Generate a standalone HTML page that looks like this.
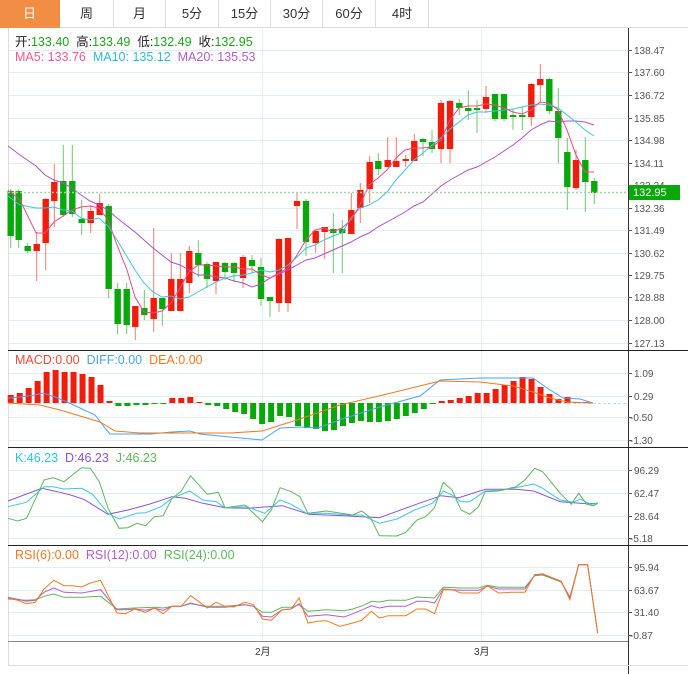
<!DOCTYPE html>
<html><head><meta charset="utf-8">
<style>
body{margin:0;width:688px;height:674px;background:#fff;overflow:hidden;font-family:"Liberation Sans","Noto Sans CJK SC",sans-serif;}
.tabs{position:absolute;left:0;top:0;height:28px;width:688px;}
.tab{position:absolute;top:0;height:28px;line-height:28px;text-align:center;font-size:13px;color:#333;border-right:1px solid #ddd;border-bottom:1px solid #ddd;box-sizing:border-box}
svg{position:absolute;left:0;top:0}
.info{position:absolute;font-size:12.5px;line-height:14px;white-space:pre;}
</style></head><body>
<svg id="s" width="688" height="674" xmlns="http://www.w3.org/2000/svg"></svg>
<div class="tabs">
<div class="tab" style="left:0;width:60px;background:#f28d45;color:#fff;border-color:#f28d45">日</div>
<div class="tab" style="left:60px;width:54px">周</div>
<div class="tab" style="left:114px;width:52px">月</div>
<div class="tab" style="left:166px;width:53px">5分</div>
<div class="tab" style="left:219px;width:52px">15分</div>
<div class="tab" style="left:271px;width:52px">30分</div>
<div class="tab" style="left:323px;width:53px">60分</div>
<div class="tab" style="left:376px;width:53px">4时</div>
<div class="tab" style="left:429px;width:259px;border-right:none"></div>
</div>
<div class="info" style="left:15px;top:35px;color:#222">开:<span style="color:#1ea51e">133.40</span>  高:<span style="color:#1ea51e">133.49</span>  低:<span style="color:#1ea51e">132.49</span>  收:<span style="color:#1ea51e">132.95</span></div>
<div class="info" style="left:15px;top:50px"><span style="color:#ef5b8c">MA5: 133.76</span>  <span style="color:#2ebad8">MA10: 135.12</span>  <span style="color:#b45ec9">MA20: 135.53</span></div>
<div class="info" style="left:15px;top:353px"><span style="color:#ee4a3a">MACD:0.00</span>  <span style="color:#4aa3f0">DIFF:0.00</span>  <span style="color:#f4791f">DEA:0.00</span></div>
<div class="info" style="left:15px;top:451px"><span style="color:#2ec4de">K:46.23</span>  <span style="color:#8b55d6">D:46.23</span>  <span style="color:#5cb85c">J:46.23</span></div>
<div class="info" style="left:15px;top:548px"><span style="color:#f4791f">RSI(6):0.00</span>  <span style="color:#b45ec9">RSI(12):0.00</span>  <span style="color:#5cb85c">RSI(24):0.00</span></div>
<script>
var s=document.getElementById('s'),h='';
function L(x1,y1,x2,y2,c,w,d){h+='<line x1="'+x1+'" y1="'+y1+'" x2="'+x2+'" y2="'+y2+'" stroke="'+c+'" stroke-width="'+(w||1)+'"'+(d?' stroke-dasharray="'+d+'"':'')+'/>';}
function T(x,y,t,c,sz){h+='<text x="'+x+'" y="'+y+'" fill="'+(c||'#555')+'" font-size="'+(sz||10)+'" font-family="Liberation Sans,Noto Sans CJK SC,sans-serif">'+t+'</text>';}
function P(pts,c,sx,oy,sy){var a=[];for(var i=0;i<pts.length;i+=2)a.push((pts[i]/(sx||1)).toFixed(1)+','+(oy!==undefined?oy+pts[i+1]/sy:pts[i+1]).toFixed(1));h+='<polyline fill="none" stroke="'+c+'" stroke-width="1" points="'+a.join(' ')+'"/>';}
var mainY=[50,72,95,118,140,163,185,208,230,253,275,297,320,343];
mainY.forEach(function(y){L(8,y+.5,628,y+.5,'#e6edf2');});
[373,396,417,440,470,493,516,538,567,590,612,635].forEach(function(y){L(8,y+.5,628,y+.5,'#e6edf2');});
L(262.5,28,262.5,642,'#e8eef2');L(481.5,28,481.5,642,'#e8eef2');
L(8.5,28,8.5,665,'#ddd');L(628.5,28,628.5,674,'#333');
L(8,350.5,688,350.5,'#222');L(8,447.5,688,447.5,'#222');L(8,545.5,688,545.5,'#222');L(8,641.5,628,641.5,'#888');
L(8,665.5,688,665.5,'#ddd');
var ml=['138.47','137.60','136.72','135.85','134.98','134.11','133.24','132.36','131.49','130.62','129.75','128.88','128.00','127.13'];
ml.forEach(function(t,i){L(628,mainY[i]+.5,632,mainY[i]+.5,'#555');T(634,mainY[i]+4,t);});
[[373,'1.09'],[396,'0.29'],[417,'-0.50'],[440,'-1.30'],[470,'96.29'],[493,'62.47'],[516,'28.64'],[538,'-5.18'],[567,'95.94'],[590,'63.67'],[612,'31.40'],[635,'-0.87']].forEach(function(a){L(628,a[0]+.5,632,a[0]+.5,'#555');T(a[1][0]=='-'?630:634,a[0]+4,a[1]);});
T(255,655,'2月','#333',10);T(474,655,'3月','#333',10);
var C=[[10.7,191,236,189,248,0],[18.7,191,240,189,248,0],[27.7,246,251,243,253,0],[36.7,244,251,232,281,1],[45.7,199,243,198,270,1],[54.3,182,201,164,227,1],[63.3,181,215,145,217,0],[72.3,181,214,145,217,0],[81.7,219,223,200,235,0],[90.7,211,223,205,233,1],[99.7,203,215,194,215,1],[108.7,206,289,204,298,0],[117.7,289,324,283,334,0],[126.7,289,325,283,334,0],[135.3,306,327,306,340,1],[144.3,308,315,290,320,0],[153.7,298,319,228,332,1],[162.3,298,309,298,326,0],[171.3,279,311,253,311,1],[180.3,279,311,253,311,1],[189.3,251,283,246,293,1],[198.3,253,265,240,277,0],[207,264,279,262,288,0],[216,262,281,262,294,1],[225,263,272,262,280,0],[234,263,273,262,282,0],[243,257,278,255,288,1],[252,260,266,255,273,0],[261,267,299,258,306,0],[270,297,301,297,317,0],[279,239,303,238,312,1],[288,238,303,238,312,1],[297,201,206,193,229,1],[306,201,242,199,256,0],[315.7,231,243,230,253,1],[324.7,227,232,227,259,1],[333.3,229,233,213,273,0],[342.3,229,233,220,273,0],[351.3,210,234,193,234,1],[360.3,190,208,183,223,1],[369.7,162,189,156,203,1],[378.3,161,169,153,175,0],[387.7,160,167,137,167,1],[396.3,161,167,137,167,1],[405.7,159,161,155,167,1],[414.3,141,161,134,161,1],[423,139,142,138,156,0],[432,142,149,130,153,0],[441,103,149,100,163,1],[450,101,149,100,163,1],[459.3,103,108,99,115,0],[468.3,108,111,90,120,0],[477,108,110,100,133,0],[486,97,109,86,113,1],[495,94,119,94,121,0],[504,94,119,94,121,0],[513,115,117,109,130,0],[522.3,115,117,107,130,0],[531.3,84,117,83,126,1],[540.3,79,85,64,102,1],[549.3,79,111,78,114,0],[558.3,111,138,88,163,0],[567.3,152,187,138,210,0],[576,160,188,150,190,1],[585.3,160,182,137,212,0],[594.3,181,193,178,204,0]];
C.forEach(function(c){var col=c[5]?'#f01c0c':'#08a80a',wc=c[5]?'#f57a70':'#6cc86c';L(c[0],c[3],c[0],c[4],wc);var t=Math.min(c[1],c[2]),b=Math.max(c[1],c[2]);h+='<rect x="'+(c[0]-3.2)+'" y="'+t+'" width="6.4" height="'+Math.max(1,b-t)+'" fill="'+col+'"/>';});
P([8,146,20,155,36,166,45,175,54,180,63,183,72,188,81,195,90,201,99,205,108,210,117,218,126,225,135,232,144,240,153,248,162,255,171,262,180,265,189,270,198,275,207,275,216,277,225,278,234,281,243,283,252,287,261,284,270,278,279,274,288,270,297,265,306,260,315,258,324,254,333,250,342,246,351,242,360,237,369,233,378,227,387,222,396,217,405,212,414,206,423,202,432,194,441,186,450,180,459,175,468,170,477,167,486,162,495,157,504,151,513,145,522,138,531,130,540,125,549,121,558,122,567,121,576,121,585,122,594,125],'#b04fcb');
P([8,196,20,205,36,208,45,208,54,207,63,210,72,211,81,218,90,220,99,218,108,226,117,240,126,255,135,270,144,283,153,292,162,297,171,296,180,299,189,297,198,292,207,287,216,282,225,278,234,276,243,275,252,273,261,270,270,272,279,270,288,265,297,257,306,248,315,245,324,240,333,236,342,233,351,218,360,208,369,205,378,200,387,192,396,180,405,170,414,160,423,153,432,145,441,138,450,129,459,122,468,115,477,112,486,112,495,111,504,110,513,109,522,107,531,105,540,104,549,105,558,108,567,115,576,122,585,130,594,136],'#3cc6df');
P([8,190,20,200,36,233,45,233,54,222,63,216,72,210,81,207,90,206,99,208,108,220,117,245,127,270,135,297,144,312,153,313,162,311,171,303,180,288,189,272,198,265,207,265,216,266,225,267,234,267,243,269,252,269,261,275,270,278,279,273,288,268,297,255,306,240,315,230,324,228,333,232,342,228,351,220,360,205,369,185,378,178,387,170,396,158,405,150,414,148,423,148,432,147,441,140,450,120,459,108,468,106,477,106,486,104,495,105,504,108,513,112,522,114,531,110,540,102,549,103,558,110,567,130,576,155,585,172,594,172],'#ee4a82');
L(8,192.5,628,192.5,'#9fd99f',1.5,'2,2');
h+='<rect x="629" y="185" width="51" height="15" fill="#08a80a"/>';T(633,196,'132.95','#fff',11);
var M=[395,393,388,381,372,370,372,372,374,377,385,401,406,406,405,405,403,403,398,398,397,402,405,406,409,412,414,419,424,422,416,417,426,428,429,431,430,426,423,421,422,422,421,419,416,413,409,403.5,401,400,398,396,393,393,389,385,381,377,379,387,394,399,397,402,402];
L(8,403.5,628,403.5,'#bfe0f4',1,'3,2');
M.forEach(function(y,i){var x=10.7+8.98*i;var up=y<403;h+='<rect x="'+(x-3)+'" y="'+Math.min(y,403)+'" width="6" height="'+Math.max(1,Math.abs(y-403))+'" fill="'+(up?'#f01c0c':'#08a80a')+'"/>';});
P([8,398,20,397,35,395,43,393,55,397,65,401,80,408,95,415,105,428,110,434,130,434,150,434,172,432,190,431,200,434,230,437,262,440,280,428,300,427,318,428,342,419,383,406,420,396,440,380,480,378,533,378,547,388,563,398,580,399,593,403],'#4aa3f0');
P([8,403,40,405,60,410,100,422,115,431,140,433,200,433,230,433,262,431,300,419,340,405,383,395,440,381,480,382,513,386,533,392,550,398,567,402,593,403],'#f4791f');
var kx=2.267;
P([18,168,95,130,130,140,160,150,190,163,245,208,290,195,340,177,390,155,420,160,460,175,510,188,560,190,640,182,700,208,780,212,860,218,950,175,1000,152,1040,158,1100,133,1170,133,1210,138,1270,170,1330,176,1355,175],'#8b55d6',kx,445,3);
P([18,185,60,172,100,125,120,125,145,132,185,130,210,148,245,205,270,222,310,205,330,203,365,185,390,160,430,138,460,165,490,170,510,188,560,185,600,205,635,165,660,178,695,205,740,205,790,210,820,210,860,235,900,222,940,195,980,175,1005,138,1025,150,1045,170,1065,170,1100,138,1140,135,1180,125,1210,117,1230,130,1270,165,1300,172,1315,162,1340,178,1355,175],'#3ac8e0',kx,445,3);
P([18,220,40,228,60,220,100,105,120,98,145,110,185,68,205,70,225,110,245,190,270,250,290,248,310,235,330,242,350,215,370,212,390,160,410,140,432,92,470,148,495,142,510,188,555,180,595,230,615,195,635,128,660,140,680,155,698,205,740,198,800,210,820,198,840,218,860,272,900,273,920,262,945,225,965,215,985,188,1005,112,1025,135,1045,195,1065,208,1085,185,1100,140,1130,138,1170,125,1190,105,1212,70,1230,80,1270,145,1295,178,1312,145,1330,178,1345,182,1355,175],'#5cb85c',kx,445,3);
P([18,168,60,172,80,170,100,160,122,153,145,163,185,163,228,160,265,198,305,195,350,193,370,195,390,190,410,190,432,182,470,190,510,190,555,185,575,190,595,208,615,208,640,193,660,193,678,185,698,205,740,200,780,203,800,198,822,188,842,175,860,177,880,172,920,172,945,162,985,165,1005,133,1045,135,1085,135,1105,127,1130,133,1190,133,1212,98,1230,96,1272,117,1292,162,1312,65,1332,65,1355,270],'#5cb85c',kx,543,3);
P([18,163,60,175,80,172,100,148,122,135,145,148,185,150,228,140,265,200,285,200,305,198,330,202,350,196,370,202,390,190,410,190,432,180,470,193,510,193,555,185,575,190,595,220,615,222,640,200,660,198,678,182,698,220,740,215,780,222,800,212,822,200,842,188,860,195,880,190,920,190,945,175,965,175,985,180,1005,138,1045,142,1085,142,1105,130,1130,138,1190,138,1212,96,1230,94,1272,115,1292,165,1312,65,1332,65,1355,270],'#b45ec9',kx,543,3);
P([18,165,40,172,60,182,80,178,100,138,122,112,145,128,165,128,185,132,205,120,228,112,265,210,285,212,305,198,330,208,350,195,370,212,390,190,410,190,432,158,450,175,470,195,490,178,510,190,530,192,555,178,575,185,595,228,615,232,640,200,660,198,678,165,698,240,720,235,740,233,770,250,800,240,820,232,842,205,860,225,880,218,920,218,945,198,965,198,985,212,1005,140,1025,140,1045,150,1085,150,1105,128,1130,150,1160,148,1190,148,1212,95,1230,92,1272,115,1292,170,1312,65,1332,65,1355,270],'#f4791f',kx,543,3);
s.innerHTML=h;
</script>
</body></html>
